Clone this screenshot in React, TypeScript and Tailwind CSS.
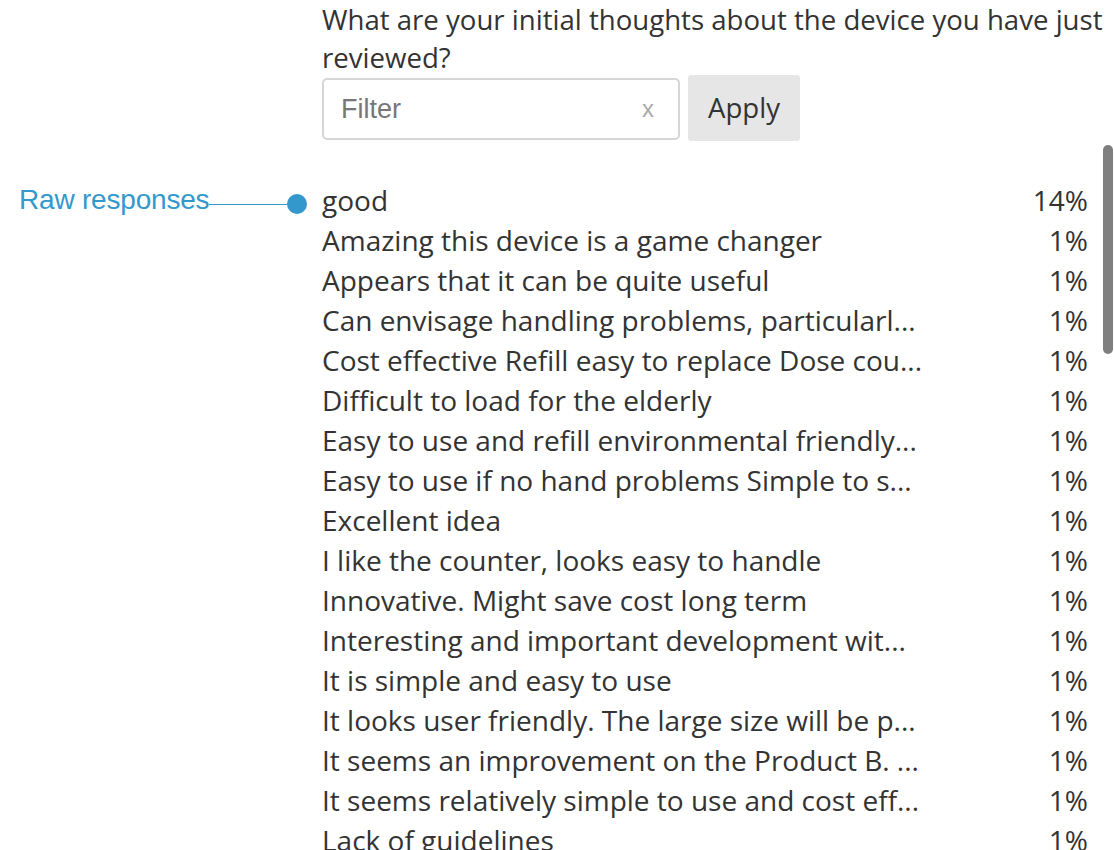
import React from "react";

const rows: [string, string][] = [
  ["good", "14%"],
  ["Amazing this device is a game changer", "1%"],
  ["Appears that it can be quite useful", "1%"],
  ["Can envisage handling problems, particularl...", "1%"],
  ["Cost effective Refill easy to replace Dose cou...", "1%"],
  ["Difficult to load for the elderly", "1%"],
  ["Easy to use and refill environmental friendly...", "1%"],
  ["Easy to use if no hand problems Simple to s...", "1%"],
  ["Excellent idea", "1%"],
  ["I like the counter, looks easy to handle", "1%"],
  ["Innovative. Might save cost long term", "1%"],
  ["Interesting and important development wit...", "1%"],
  ["It is simple and easy to use", "1%"],
  ["It looks user friendly. The large size will be p...", "1%"],
  ["It seems an improvement on the Product B. ...", "1%"],
  ["It seems relatively simple to use and cost eff...", "1%"],
  ["Lack of guidelines", "1%"],
];

export default function App() {
  return (
    <div className="relative h-[850px] w-[1114px] overflow-hidden bg-white font-['Open_Sans',sans-serif] text-[#333]">
      <div className="pl-[322px]">
        {/* Question */}
        <p className="w-[794px] text-[27.6px] leading-[38px] text-[#333]">
          What are your initial thoughts about the device you have just reviewed?
        </p>

        {/* Filter */}
        <div className="mt-[-1px] flex items-start gap-2">
          <div className="mt-[3px] flex h-[62px] w-[358px] items-center justify-between rounded-[5px] border-2 border-[#d6d6d6] pl-[17px] pr-[24px] font-['Liberation_Sans',sans-serif]">
            <span className="text-[27px] text-[#777]">Filter</span>
            <span className="text-[24px] text-[#aaa]">x</span>
          </div>
          <button className="flex h-[66px] w-[112px] items-center justify-center rounded-[3px] bg-[#e6e6e6] text-[27.6px] text-[#333]">
            Apply
          </button>
        </div>
      </div>

      {/* Responses */}
      <div className="mt-[39px] flex">
        <div className="flex h-[40px] w-[322px] shrink-0 items-center pl-[19px]">
          <span className="font-['Liberation_Sans',sans-serif] text-[28px] leading-[40px] tracking-[-0.2px] text-[#3399cc]">
            Raw responses
          </span>
          <div className="mt-[8px] h-px w-[78px] bg-[#3399cc]" />
          <div className="mt-[8px] h-[20px] w-[20px] shrink-0 rounded-full bg-[#3399cc]" />
        </div>
        <ul className="w-[766px]">
          {rows.map(([label, pct], i) => (
            <li key={i} className="flex h-[40px] items-center justify-between whitespace-nowrap text-[28px] text-[#333]">
              <span>{label}</span>
              <span>{pct}</span>
            </li>
          ))}
        </ul>
      </div>

      {/* scrollbar */}
      <div className="absolute left-[1103px] top-[145px] h-[209px] w-[10px] rounded-full bg-[#7f7f7f]" />
    </div>
  );
}
